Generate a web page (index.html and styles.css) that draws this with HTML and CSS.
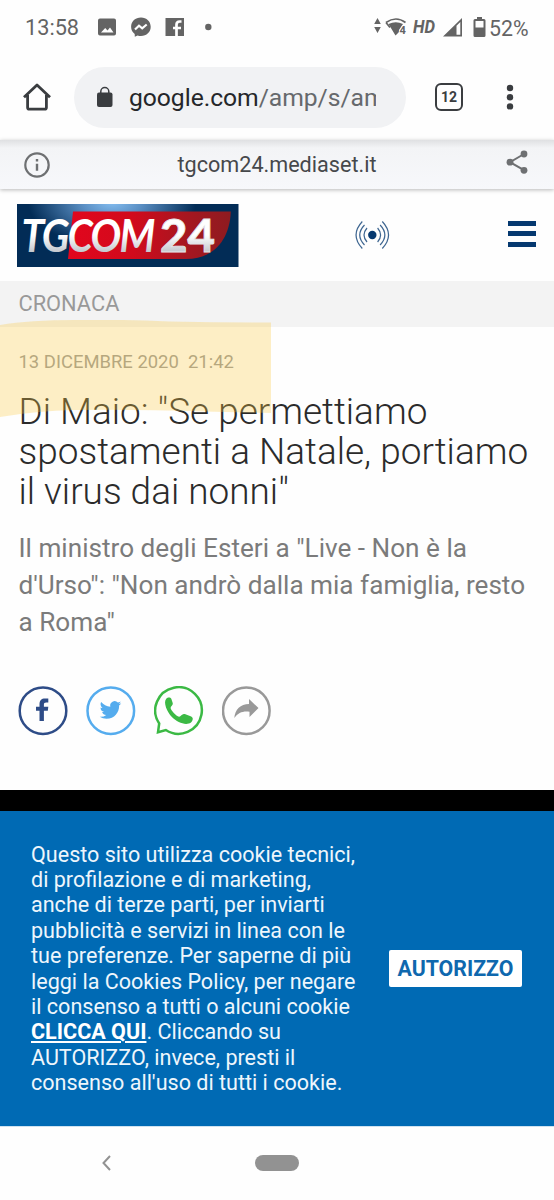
FILE: index.html
```html
<!DOCTYPE html>
<html lang="it">
<head>
<meta charset="utf-8">
<title>TGCOM24</title>
<link rel="stylesheet" href="styles.css">
</head>
<body>
<div class="phone">
  <div class="status">
    <span class="clock">13:58</span>
    <svg class="notif" width="120" height="24" viewBox="96 16 120 24">
      <path fill="#646464" fill-rule="evenodd" d="M100 18.500h14a2 2 0 0 1 2 2v13a2 2 0 0 1-2 2h-14a2 2 0 0 1-2-2v-13a2 2 0 0 1 2-2zM101 32.500h12.500l-3.500-5-2.500 3-2.300-2.500z"/>
      <path fill="#646464" d="M141 17.500c5.600 0 9.700 4 9.700 9.300s-4.100 9.200-9.700 9.200c-1.200 0-2.400-.2-3.400-.6l-2.800 1.300-.1-2.700c-2.200-1.600-3.600-4.200-3.600-7.200 0-5.400 4.200-9.300 9.900-9.300z"/>
      <path fill="none" stroke="#fff" stroke-width="2.200" d="M135 29.500l4-3.800 3.200 2.600 4.500-3.800"/>
      <path fill="#646464" d="M165.500 18h18.500v18h-18.500z"/>
      <path fill="none" stroke="#fff" stroke-width="2.700" d="M181.500 21.500h-1.800q-3.200 0-3.200 3.300V36M173 28h8"/>
      <circle cx="208.300" cy="27" r="3.200" fill="#646464"/>
    </svg>
    <svg class="wifi" width="36" height="24" viewBox="372 16 36 24">
      <g fill="#646464">
        <path d="M374.200 24l3.300-6 3.300 6zM374.200 27h6.600l-3.300 6z"/>
        <path d="M388.500 24q7.300-3.500 14.500 0l-2 3-2 3v2l-3.500 3.500z"/>
      </g>
      <path d="M386 22.500q10-7 19.500 0M386 22.500l4 5" fill="none" stroke="#646464" stroke-width="1.700"/>
      <text class="wifi-num" x="399.500" y="33.500">4</text>
    </svg>
    <span class="hd">HD</span>
    <svg class="signal" width="48" height="24" viewBox="440 16 48 24">
      <path fill="#646464" fill-rule="evenodd" d="M443 36.500L462 18v18.500zM456.500 25.800v9h3.800V22z"/>
      <path fill="#646464" fill-rule="evenodd" d="M477 17h5v2h2q1.500 0 1.500 1.500v15q0 1.500-1.500 1.500h-9q-1.500 0-1.500-1.500v-15q0-1.500 1.500-1.500h2zM475.500 21v6.500h8V21z"/>
    </svg>
    <span class="battery">52%</span>
  </div>

  <div class="toolbar">
    <svg class="home" width="30" height="30" viewBox="22 82 30 30"><path fill="none" stroke="#3a3d40" stroke-width="2.800" stroke-linejoin="round" d="M24 97.200L37 85l13 12.200M27.600 95v12.500q0 1.700 1.700 1.700h15.400q1.700 0 1.700-1.700V95"/></svg>
    <div class="omnibox">
      <svg class="lock" width="18" height="22" viewBox="96 86 18 22"><path d="M100.800 94v-2.500a4 4 0 0 1 8 0V94" fill="none" stroke="#3a3d40" stroke-width="1.500"/><rect x="97" y="92.500" width="15.500" height="14.500" rx="2" fill="#3a3d40"/></svg>
      <div class="url"><b>google.com</b>/amp/s/am</div>
    </div>
    <div class="tabs">12</div>
    <svg class="more" width="8" height="26" viewBox="0 0 8 26"><g fill="#3a3d40"><circle cx="4" cy="4" r="3.200"/><circle cx="4" cy="13.200" r="3.200"/><circle cx="4" cy="22.400" r="3.200"/></g></svg>
  </div>

  <div class="ampbar">
    <svg class="info" width="28" height="28" viewBox="0 0 28 28"><circle cx="14" cy="14" r="11.700" fill="none" stroke="#6e7072" stroke-width="2.200"/><path d="M12.800 8h2.400v2.500h-2.400zM12.800 12.800h2.400v7h-2.400z" fill="#6e7072"/></svg>
    <span class="host">tgcom24.mediaset.it</span>
    <svg class="share" width="24" height="26" viewBox="505 149 24 26"><path d="M524 154l-14 8.200 14 8" fill="none" stroke="#6e7072" stroke-width="2"/><g fill="#6e7072"><circle cx="524" cy="154" r="3.400"/><circle cx="510" cy="162.200" r="3.400"/><circle cx="524" cy="170.300" r="3.400"/></g></svg>
  </div>

  <header class="masthead">
    <svg class="logo" width="222" height="63" viewBox="17 204 222 63">
      <defs>
        <radialGradient id="sky" gradientUnits="userSpaceOnUse" cx="0" cy="0" r="1" gradientTransform="translate(112 202) scale(84 44)"><stop offset="0" stop-color="#84bdf0"/><stop offset=".35" stop-color="#5a8fc4"/><stop offset="1" stop-color="#022c56"/></radialGradient>
        <linearGradient id="red" x1="0" x2="1"><stop offset="0" stop-color="#e2061d"/><stop offset=".4" stop-color="#d10a1c"/><stop offset=".7" stop-color="#a91620"/><stop offset="1" stop-color="#8e1b20"/></linearGradient>
        <linearGradient id="metal" gradientUnits="userSpaceOnUse" x1="0" y1="218" x2="0" y2="252"><stop offset=".5" stop-color="#fff"/><stop offset="1" stop-color="#c3c7cd"/></linearGradient>
      </defs>
      <path fill="url(#sky)" d="M17 204h221.500v63H17z"/>
      <path fill="url(#red)" d="M73 211.500h157.800c-1 27-16 47.500-45 47.500H68z"/>
      <g fill="url(#metal)">
        <text class="logo-word" x="21.500" y="251.500" textLength="132" lengthAdjust="spacingAndGlyphs">TGCOM</text>
        <text class="logo-num" x="160" y="251.500" textLength="55" lengthAdjust="spacingAndGlyphs">24</text>
      </g>
    </svg>
    <svg class="live" width="38" height="32" viewBox="353 219 38 32">
      <circle cx="372.300" cy="235" r="4.200" fill="#063970"/>
      <g fill="none" stroke="#3e6691" stroke-width="1.200">
        <path d="M367 228q-6 7 0 14M364.500 225q-9.500 10 0 20M362.300 221.500q-12.500 13.500 0 27"/>
        <path d="M377.600 228q6 7 0 14M380.100 225q9.500 10 0 20M382.300 221.500q12.500 13.500 0 27"/>
      </g>
    </svg>
    <div class="burger"><i></i><i></i><i></i></div>
  </header>

  <div class="category">CRONACA</div>

  <main class="article">
    <svg class="marker" width="271" height="97" viewBox="0 0 271 97"><path fill="#fccb41" fill-opacity=".3" d="M0 5Q30 0 75 0Q110-1 170 1.500Q220 2.500 271 2.500V93L205 91.500Q130 89 75 90Q35 91 0 97z"/></svg>
    <div class="date">13 DICEMBRE 2020&nbsp; 21:42</div>
    <h1 class="title">Di Maio: "Se permettiamo<br>spostamenti a Natale, portiamo<br>il virus dai nonni"</h1>
    <p class="subtitle">Il ministro degli Esteri a "Live - Non è la<br>d'Urso": "Non andrò dalla mia famiglia, resto<br>a Roma"</p>
    <div class="social">
      <svg width="50" height="50" viewBox="18 686 50 50"><circle cx="43" cy="710.700" r="23.300" fill="none" stroke="#2e4c87" stroke-width="2.500"/><path fill="#2e4c87" d="M39.500 721v-10.300H36v-3.900h3.500v-2.400c0-3.800 2-5.800 5.500-5.800h3.300v4h-2.100c-1.700 0-2.300.7-2.300 2.200v2h4.400l-.5 3.900h-3.900V721z"/></svg>
      <svg width="50" height="50" viewBox="86 686 50 50"><circle cx="110.800" cy="710.700" r="23.300" fill="none" stroke="#55acee" stroke-width="2.500"/><path fill="#55acee" transform="translate(99.700 699.200) scale(.9)" d="M23.950 4.570a10 10 0 0 1-2.820.77 4.960 4.960 0 0 0 2.160-2.720c-.95.550-2.010.95-3.130 1.180a4.920 4.920 0 0 0-8.380 4.480C7.690 8.090 4.070 6.130 1.640 3.160a4.820 4.820 0 0 0-.67 2.480c0 1.710.87 3.210 2.190 4.100a4.900 4.900 0 0 1-2.230-.62v.06a4.920 4.920 0 0 0 3.950 4.830 5 5 0 0 1-2.210.08 4.940 4.940 0 0 0 4.600 3.420A9.870 9.870 0 0 1 0 19.540a14 14 0 0 0 7.550 2.210c9.050 0 14-7.500 14-13.990 0-.21 0-.42-.02-.63a9.940 9.940 0 0 0 2.420-2.560z"/></svg>
      <svg width="50" height="50" viewBox="154 686 50 50"><path fill="none" stroke="#3bb944" stroke-width="2.500" d="M159.200 723.500A23.300 23.300 0 1 1 165.800 730L158 732.300z"/><path fill="#3bb944" d="M166.200 698.800c1.500-1.700 4.200-1.700 5.100-.1l1.500 4.500c.5 1.800-2.300 3.200-2.200 4.700.2 2.200 5.600 8.100 8.400 8.800 1.600.3 3-2.700 4.900-2.600 1 0 7.200 2.100 8.400 3.300 1.500 1.700-.8 5.500-3.500 6.200-5.200 1.300-12-1.500-16.900-6.500-4.900-5.100-8.900-14.600-5.700-18.300z"/></svg>
      <svg width="50" height="50" viewBox="222 686 50 50"><circle cx="246.300" cy="710.700" r="23.300" fill="none" stroke="#999" stroke-width="2.500"/><path fill="#999" d="M249 699l9.500 9-9 9v-5.300c-7-.8-11.200 1-15.200 6.300.7-8.500 6.200-14 14.700-14z"/></svg>
    </div>
  </main>

  <div class="divider"></div>

  <section class="cookie">
    <p class="cookie-text">Questo sito utilizza cookie tecnici,<br>di profilazione e di marketing,<br>anche di terze parti, per inviarti<br>pubblicità e servizi in linea con le<br>tue preferenze. Per saperne di più<br>leggi la Cookies Policy, per negare<br>il consenso a tutti o alcuni cookie<br><a class="cookie-link">CLICCA QUI</a>. Cliccando su<br>AUTORIZZO, invece, presti il<br>consenso all'uso di tutti i cookie.</p>
    <button class="accept">AUTORIZZO</button>
  </section>

  <nav class="sysnav">
    <svg class="back" width="12" height="18" viewBox="0 0 12 18"><path d="M10 2L3.500 9l6.500 7" fill="none" stroke="#929292" stroke-width="2"/></svg>
    <span class="pill"></span>
  </nav>
</div>
</body>
</html>
```
FILE: styles.css
```css
* { box-sizing: border-box; }
body { margin: 0; background: #fff; font-family: Roboto, sans-serif; }
svg { display: block; flex: none; }
.phone { width: 554px; height: 1200px; display: flex; flex-direction: column; overflow: hidden; background: #fefefe; }
.phone > * { flex: none; }

.status { height: 54px; display: flex; align-items: center; padding: 2px 0 0 25px; color: #646464; white-space: nowrap; }
.clock { width: 71px; font-size: 21.700px; line-height: 26px; }
.notif { width: 120px; }
.wifi { margin-left: 156px; }
.wifi-num { font: bold 11px Roboto, sans-serif; fill: #646464; stroke: #fff; stroke-width: 1.500px; paint-order: stroke; }
.hd { width: 27px; margin: -3px 0 0 5px; font-size: 19px; font-weight: 700; font-style: italic; transform: scaleX(.88); transform-origin: left; }
.battery { margin-left: 1px; font-size: 21.300px; }

.toolbar { height: 86px; display: flex; align-items: center; padding-left: 22px; }
.omnibox { width: 332px; height: 61px; margin-left: 22px; padding-left: 22px; border-radius: 31px; background: #f1f2f4; display: flex; align-items: center; }
.url { width: 247px; margin-left: 15px; padding-top: 2px; overflow: hidden; white-space: nowrap; font-size: 24.700px; line-height: 36px; letter-spacing: -.05px; color: #66696c; }
.url b { font-weight: 400; color: #25272a; }
.tabs { width: 28px; height: 28px; margin-left: 29px; border: 2.800px solid #3a3d40; border-radius: 6px; font-size: 14px; font-weight: 700; line-height: 24px; text-align: center; color: #3a3d40; }
.more { margin-left: 43px; }

.ampbar { height: 49px; display: flex; align-items: center; justify-content: space-between; padding: 0 25px 0 23px; background: linear-gradient(#dfe0e2, #f3f4f6 8px, #f7f8fb); box-shadow: 0 1px 4px rgba(0,0,0,.28); position: relative; }
.host { margin-left: -2px; font-size: 21.600px; color: #46484b; }
.share { margin-top: -5px; }

.masthead { height: 92px; display: flex; align-items: center; padding: 1px 18px 1px 17px; }
.logo-word { font: italic 700 46px Lato, sans-serif; letter-spacing: -2px; }
.logo-num { font: 900 46px Lato, sans-serif; stroke: #e4e6e9; stroke-width: .8px; }
.live { margin-left: 114px; }
.burger { width: 28px; height: 26px; margin: -3px 0 0 117px; display: flex; flex-direction: column; justify-content: space-between; }
.burger i { height: 5px; background: #063970; }

.category { height: 46px; padding: 0 0 0 18.500px; background: #f3f3f3; color: #999; font-size: 21.800px; line-height: 46px; }

.article { height: 463px; padding: 23px 0 0 18.500px; position: relative; }
.marker { position: absolute; left: 0; top: -7px; z-index: 1; }
.date { font-size: 18.450px; line-height: 24px; color: #999; }
.title { margin: 18px 0 0; font-size: 36.950px; line-height: 40px; font-weight: 300; color: #2b2b2b; white-space: nowrap; }
.subtitle { margin: 18px 0 0; font-size: 26.150px; line-height: 37px; color: #7b7b7b; white-space: nowrap; }
.social { display: flex; gap: 18px; margin: 45px 0 0 -.5px; }

.divider { height: 21px; background: #000; }

.cookie { height: 315px; display: flex; align-items: center; padding-left: 31px; background: #006ab4; }
.cookie-text { width: 358px; margin: 0; font-size: 21.550px; line-height: 25.350px; color: #eef6fc; white-space: nowrap; }
.cookie-link { font-weight: 700; text-decoration: underline; color: #fff; }
.accept { width: 133px; height: 37px; padding: 0 0 1px; border: 0; border-radius: 2px; background: #fff; color: #0f68ae; font: 700 21.300px Roboto, sans-serif; }

.sysnav { height: 74px; display: flex; align-items: center; padding: 0 0 1px 100px; border-top: 1px solid #cfe2f0; }
.pill { width: 44px; height: 16px; margin-left: 143px; border-radius: 8px; background: #929292; }
```
